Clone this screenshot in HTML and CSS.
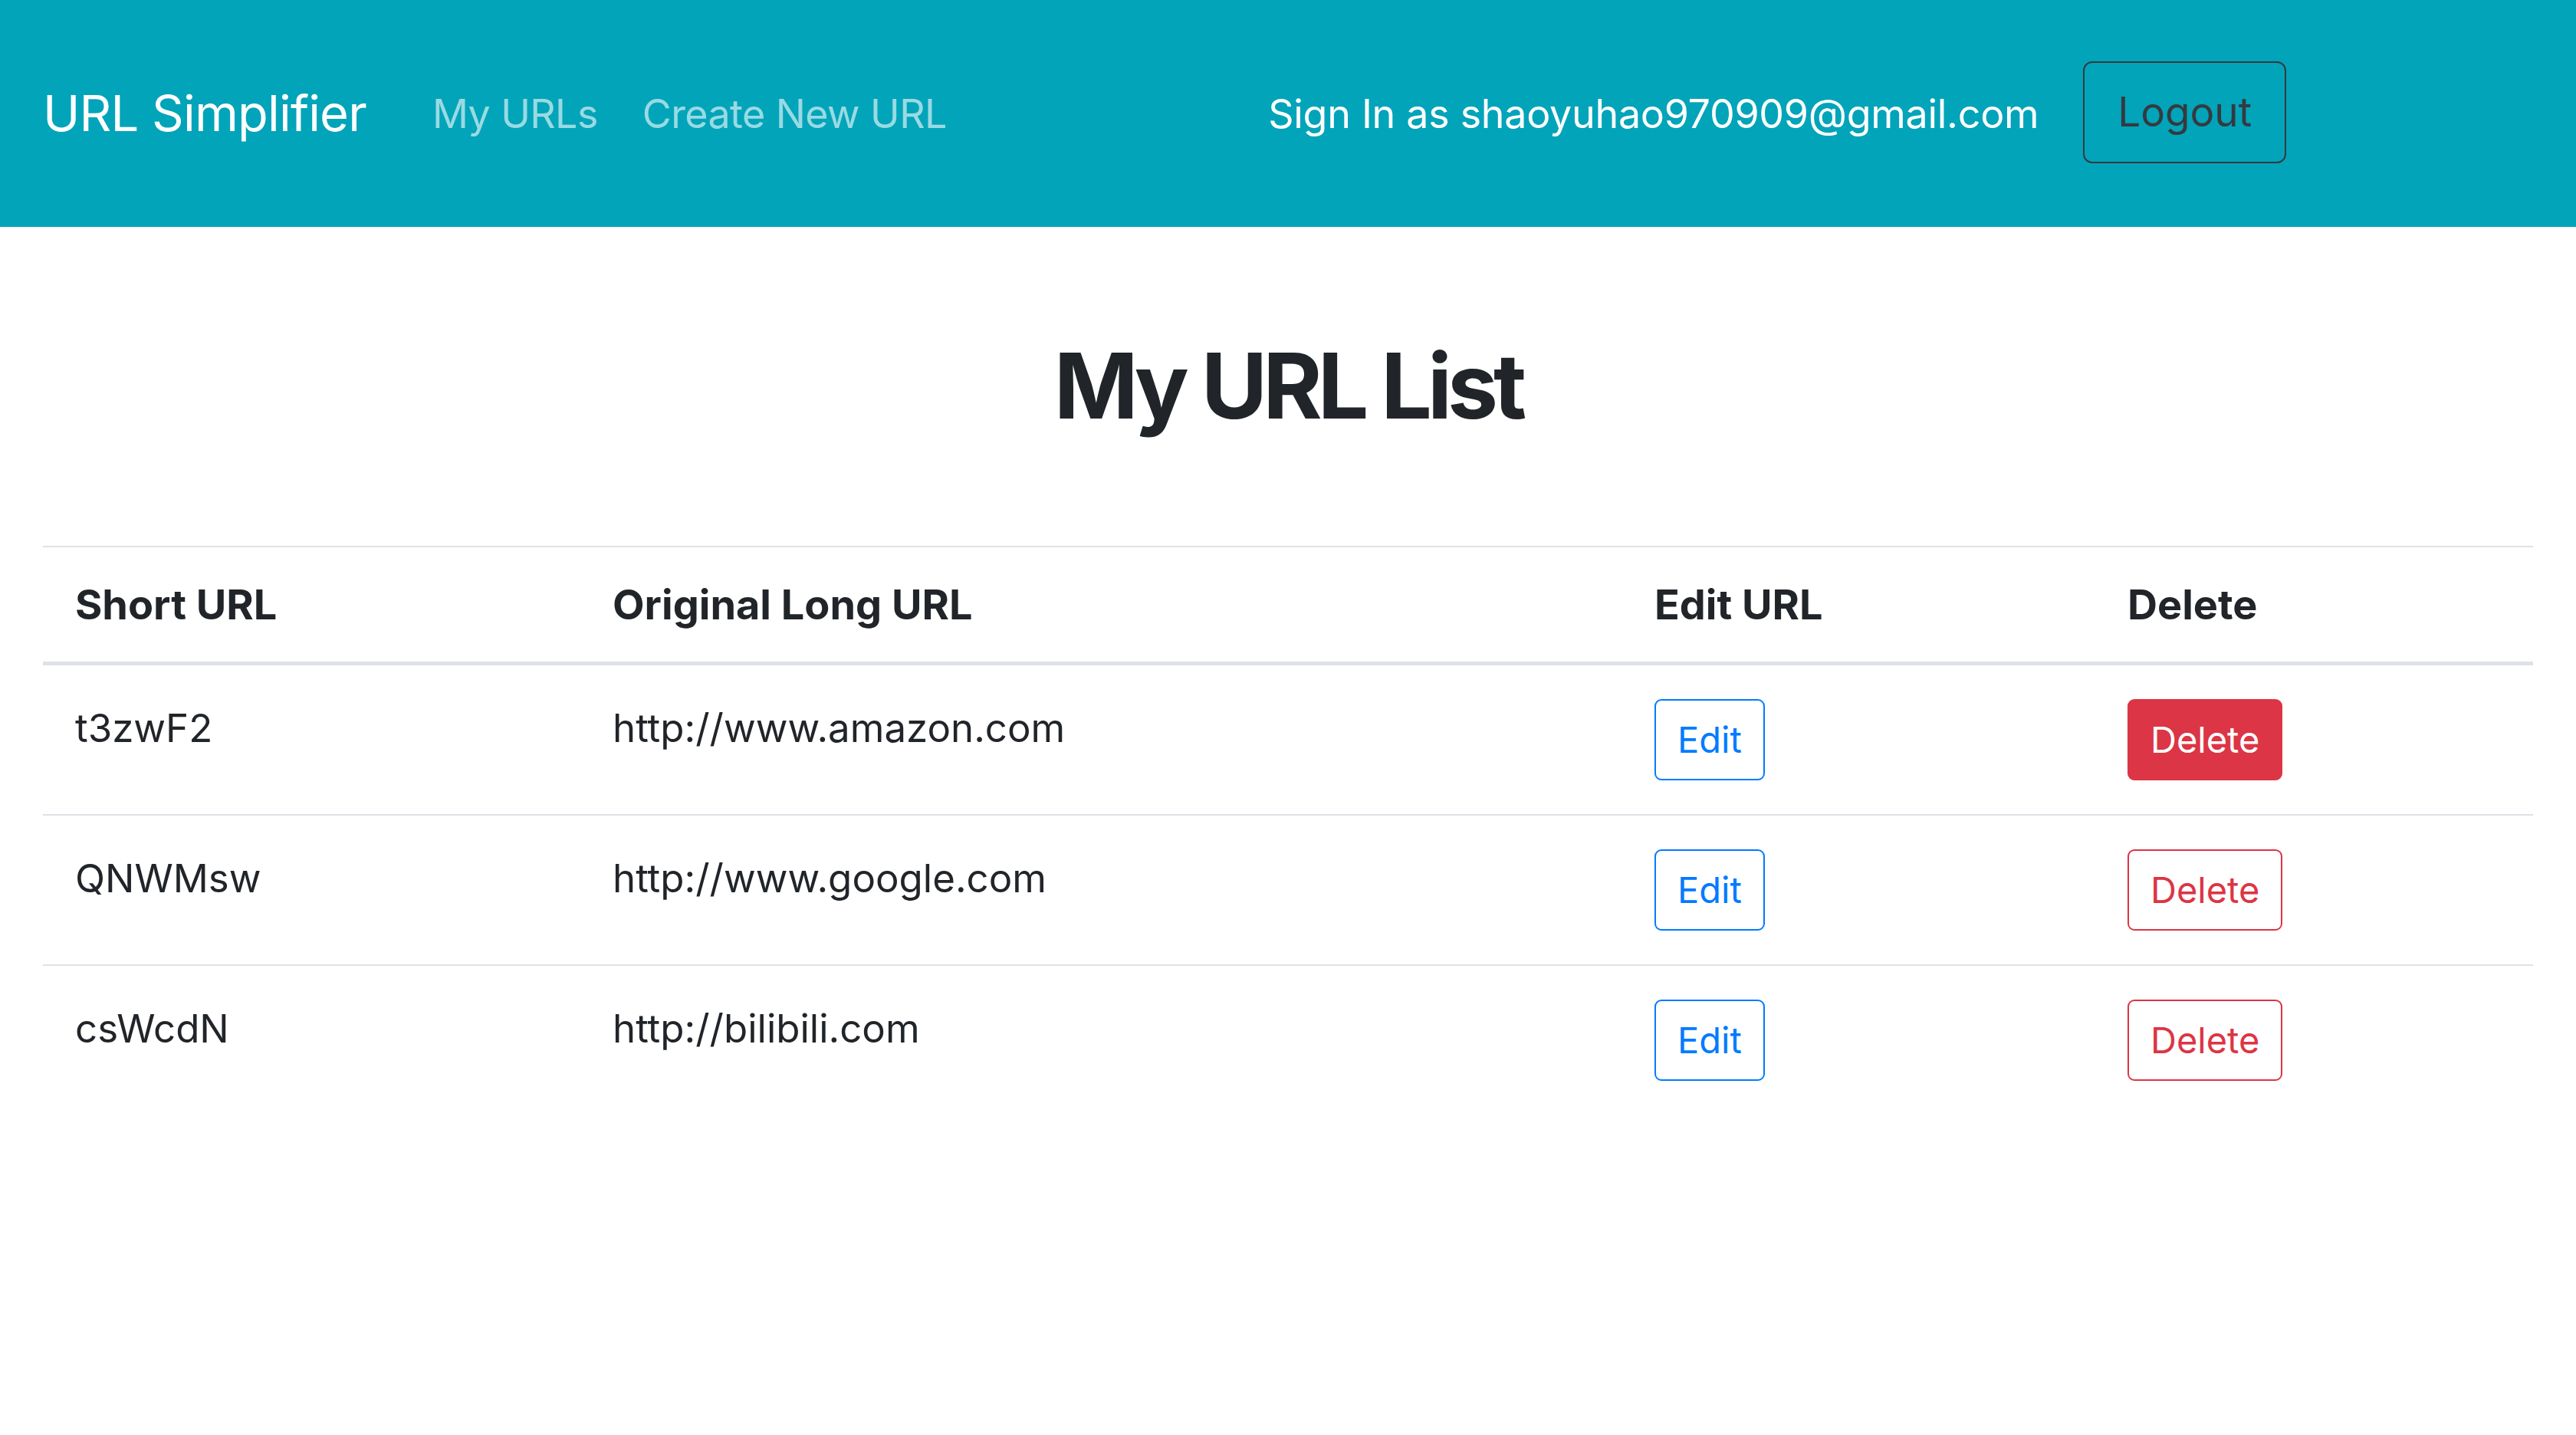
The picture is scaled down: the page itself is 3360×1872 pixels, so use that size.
FILE: index.html
```html
<!DOCTYPE html>
<html lang="en">
<head>
<meta charset="utf-8">
<title>URL Simplifier</title>
<link rel="stylesheet" href="styles.css">
</head>
<body>
<nav class="navbar">
  <a class="brand" href="#">URL Simplifier</a>
  <ul class="nav-links">
    <li><a href="#">My URLs</a></li>
    <li><a href="#">Create New URL</a></li>
  </ul>
  <div class="nav-right">
    <span class="signin">Sign In as shaoyuhao970909@gmail.com</span>
    <button class="btn btn-logout">Logout</button>
  </div>
</nav>
<main class="content">
  <h1 class="title">My URL List</h1>
  <table class="url-table">
    <colgroup>
      <col class="c1"><col class="c2"><col class="c3"><col class="c4">
    </colgroup>
    <thead>
      <tr><th>Short URL</th><th>Original Long URL</th><th>Edit URL</th><th>Delete</th></tr>
    </thead>
    <tbody>
      <tr>
        <td>t3zwF2</td><td>http://www.amazon.com</td>
        <td><button class="btn btn-edit">Edit</button></td>
        <td><button class="btn btn-delete solid">Delete</button></td>
      </tr>
      <tr>
        <td>QNWMsw</td><td>http://www.google.com</td>
        <td><button class="btn btn-edit">Edit</button></td>
        <td><button class="btn btn-delete">Delete</button></td>
      </tr>
      <tr>
        <td>csWcdN</td><td>http://bilibili.com</td>
        <td><button class="btn btn-edit">Edit</button></td>
        <td><button class="btn btn-delete">Delete</button></td>
      </tr>
    </tbody>
  </table>
</main>
</body>
</html>
```

FILE: styles.css
```css
* { box-sizing: border-box; }
html, body { margin: 0; padding: 0; }
body {
  font-family: Inter, "Liberation Sans", Arial, sans-serif;
  color: #212529;
  background: #fff;
  font-size: 50px;
}
a { text-decoration: none; }

.navbar {
  height: 296px;
  background: #02a4b9;
  display: flex;
  align-items: center;
  padding: 0 378px 0 56px;
}
.brand {
  color: #fff;
  font-size: 65px;
  letter-spacing: -0.8px;
  line-height: 1.5;
  margin-right: 86px;
}
.nav-links {
  list-style: none;
  margin: 0;
  padding: 0;
  display: flex;
  gap: 58px;
}
.nav-links a {
  color: rgba(255, 255, 255, 0.6);
  font-size: 52px;
  letter-spacing: -0.6px;
}
.nav-right {
  margin-left: auto;
  display: flex;
  align-items: center;
  gap: 58px;
}
.signin {
  color: #fff;
  font-size: 52px;
  letter-spacing: -0.3px;
}
.btn {
  font-family: inherit;
  background: transparent;
  cursor: pointer;
  border: 2px solid transparent;
  display: inline-block;
  vertical-align: top;
}
.btn-logout {
  color: #343a40;
  border-color: #343a40;
  font-size: 53px;
  line-height: 79px;
  padding: 25px 43px;
  border-radius: 12px;
  margin-top: -3px;
}

.content { padding: 0 56px; }
.title {
  text-align: center;
  font-size: 118px;
  font-weight: 700;
  line-height: 1.2;
  margin: 137px 0 137px;
  letter-spacing: -6px;
}
.url-table {
  width: 100%;
  border-collapse: collapse;
  table-layout: fixed;
}
.c1 { width: 701px; }
.c2 { width: 1359px; }
.c3 { width: 617px; }
.c4 { width: 571px; }
.url-table th {
  text-align: left;
  font-weight: 700;
  font-size: 54px;
  line-height: 69px;
  padding: 40px 42px;
  border-top: 2px solid #dee2e6;
  border-bottom: 5px solid #dee2e6;
  vertical-align: bottom;
}
.url-table td {
  font-size: 51px;
  line-height: 75px;
  padding: 44px 42px;
  border-bottom: 2px solid #dee2e6;
  vertical-align: top;
}
.url-table tbody tr:last-child td { border-bottom: none; }
.btn-edit, .btn-delete {
  font-size: 47px;
  line-height: 72px;
  padding: 15px 28px;
  border-radius: 9px;
}
.btn-edit { color: #007bff; border-color: #007bff; }
.btn-delete { color: #dc3545; border-color: #dc3545; }
.btn-delete.solid { background: #dc3545; color: #fff; }
```
